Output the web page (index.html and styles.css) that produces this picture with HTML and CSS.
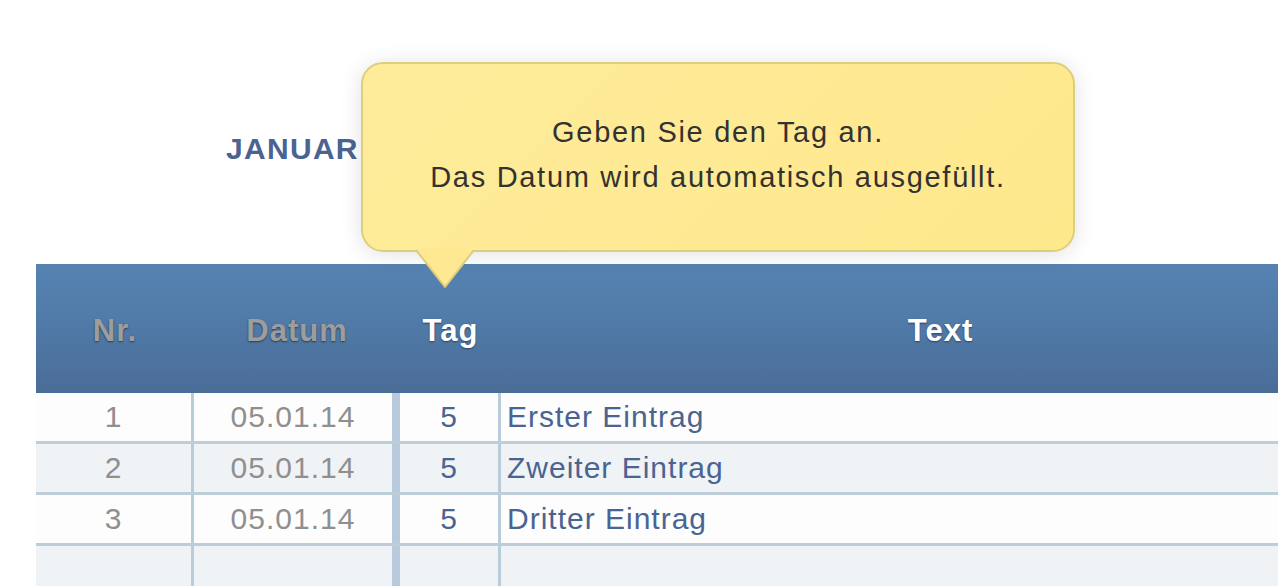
FILE: index.html
```html
<!DOCTYPE html>
<html lang="de">
<head>
<meta charset="utf-8">
<title>Januar 2014</title>
<link rel="stylesheet" href="styles.css">
</head>
<body>
<div class="page">
  <div class="title-area">
    <h1 class="month">JANUAR 2014</h1>
  </div>
  <div class="table">
    <div class="head">
      <div class="hcell dim">Nr.</div>
      <div class="hcell dim">Datum</div>
      <div class="hcell">Tag</div>
      <div class="hcell">Text</div>
    </div>
    <div class="row">
      <div class="cell nr">1</div>
      <div class="cell date">05.01.14</div>
      <div class="cell day">5</div>
      <div class="cell text">Erster Eintrag</div>
    </div>
    <div class="row alt">
      <div class="cell nr">2</div>
      <div class="cell date">05.01.14</div>
      <div class="cell day">5</div>
      <div class="cell text">Zweiter Eintrag</div>
    </div>
    <div class="row">
      <div class="cell nr">3</div>
      <div class="cell date">05.01.14</div>
      <div class="cell day">5</div>
      <div class="cell text">Dritter Eintrag</div>
    </div>
    <div class="row alt">
      <div class="cell nr"></div>
      <div class="cell date"></div>
      <div class="cell day"></div>
      <div class="cell text"></div>
    </div>
  </div>
  <div class="tooltip">
    <p class="tip-text">Geben Sie den Tag an.<br>Das Datum wird automatisch ausgefüllt.</p>
    <svg class="tip-arrow" width="60" height="40" viewBox="0 0 60 40">
      <polygon points="1,0 30,38 59,0" fill="#fee992"/>
      <polyline points="1,1 30,38 59,1" fill="none" stroke="#dccd7c" stroke-width="2" stroke-linejoin="round"/>
    </svg>
  </div>
</div>
</body>
</html>
```
FILE: styles.css
```css
html, body {
  margin: 0;
  padding: 0;
  background: #ffffff;
  overflow: hidden;
}
body {
  width: 1278px;
  height: 586px;
  font-family: "Liberation Sans", Arial, Helvetica, sans-serif;
}
.page {
  position: relative;
  box-sizing: border-box;
  width: 1278px;
  height: 586px;
  padding-left: 36px;
  overflow: hidden;
}
.title-area {
  height: 264px;
  display: flex;
  align-items: flex-start;
  padding-left: 190px;
  box-sizing: border-box;
}
.month {
  margin: 0;
  padding-top: 133px;
  font-size: 30px;
  line-height: 32px;
  font-weight: bold;
  letter-spacing: 1.3px;
  color: #4a6390;
  white-space: nowrap;
}
.table {
  width: 1344px;
}
.head {
  height: 129px;
  display: grid;
  grid-template-columns: 158px 206px 101px 1fr;
  background: linear-gradient(to bottom, #5683b2 0%, #5079a7 50%, #4a6d97 100%);
}
.hcell {
  display: flex;
  align-items: center;
  justify-content: center;
  font-size: 31px;
  font-weight: bold;
  letter-spacing: 1px;
  color: #ffffff;
  text-shadow: 0 1px 2px rgba(0, 0, 0, 0.45);
  padding-top: 4px;
}
.hcell.dim {
  color: #9d9d9d;
  text-shadow: 0 1px 2px rgba(0, 0, 0, 0.5);
}
.row {
  display: grid;
  grid-template-columns: 158px 206px 101px 1fr;
  height: 51px;
  box-sizing: border-box;
  border-bottom: 3px solid #bdced9;
  background: #fdfdfd;
}
.row.alt {
  background: #eff3f5;
}
.cell {
  display: flex;
  align-items: center;
  font-size: 30px;
  letter-spacing: 1px;
  box-sizing: border-box;
}
.nr {
  justify-content: center;
  color: #8f8f8f;
  border-right: 3px solid #b9ccd9;
}
.date {
  justify-content: center;
  color: #8f8f8f;
  border-right: 8px solid #b7cbdc;
}
.day {
  justify-content: center;
  color: #4a6491;
  border-right: 3px solid #b9ccd9;
}
.text {
  justify-content: flex-start;
  padding-left: 6px;
  color: #4a6491;
}
.tooltip {
  position: absolute;
  left: 361px;
  top: 62px;
  width: 714px;
  height: 190px;
  box-sizing: border-box;
  border: 2px solid #ddce7d;
  border-radius: 22px;
  background: linear-gradient(135deg, #ffec9b 0%, #feea94 50%, #fee88c 100%);
  box-shadow: 0 2px 22px rgba(0, 0, 0, 0.12);
  display: flex;
  align-items: center;
  justify-content: center;
}
.tip-text {
  margin: 0;
  padding-bottom: 4px;
  text-align: center;
  font-size: 29px;
  line-height: 45px;
  letter-spacing: 1.7px;
  color: #333230;
}
.tip-arrow {
  position: absolute;
  left: 52px;
  top: 185px;
}
```
